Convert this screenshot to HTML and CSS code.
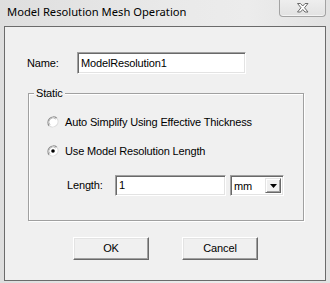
FILE: index.html
```html
<!DOCTYPE html>
<html>
<head>
<meta charset="utf-8">
<link rel="stylesheet" href="styles.css">
</head>
<body>
<div class="window">
  <div class="titlebar">
    <span class="title">Model Resolution Mesh Operation</span>
    <div class="close">
      <svg width="12" height="10" viewBox="0 0 12 10"><polygon points="0.5,0.5 3.5,0.5 5.75,3 8,0.5 11,0.5 7.5,4.75 11,9 8,9 5.75,6.5 3.5,9 0.5,9 4,4.75" fill="#fff" stroke="#6a6a6a" stroke-width="1" stroke-linejoin="round"/></svg>
    </div>
  </div>
  <div class="client">
    <div class="name-row">
      <span class="label name-label">Name:</span>
      <div class="textbox name-box">ModelResolution1</div>
    </div>
    <div class="group">
      <span class="legend">Static</span>
      <div class="radio-row">
        <span class="radio"><svg width="12" height="12" viewBox="0 0 12 12"><circle cx="6" cy="6" r="5.4" fill="#fff"/><path d="M2.2 9.8A5.4 5.4 0 0 1 9.8 2.2" fill="none" stroke="#8c8c8c" stroke-width="1.2"/><path d="M9.8 2.2A5.4 5.4 0 0 1 2.2 9.8" fill="none" stroke="#dcdcdc" stroke-width="1.2"/><path d="M3.1 8.9A4.1 4.1 0 0 1 8.9 3.1" fill="none" stroke="#bdbdbd" stroke-width="1"/></svg></span>
        <span class="label">Auto Simplify Using Effective Thickness</span>
      </div>
      <div class="radio-row second">
        <span class="radio"><svg width="12" height="12" viewBox="0 0 12 12"><circle cx="6" cy="6" r="5.4" fill="#fff"/><path d="M2.2 9.8A5.4 5.4 0 0 1 9.8 2.2" fill="none" stroke="#8c8c8c" stroke-width="1.2"/><path d="M9.8 2.2A5.4 5.4 0 0 1 2.2 9.8" fill="none" stroke="#dcdcdc" stroke-width="1.2"/><path d="M3.1 8.9A4.1 4.1 0 0 1 8.9 3.1" fill="none" stroke="#bdbdbd" stroke-width="1"/><circle cx="6" cy="6" r="1.8" fill="#000"/></svg></span>
        <span class="label">Use Model Resolution Length</span>
      </div>
      <div class="length-row">
        <span class="label length-label">Length:</span>
        <div class="textbox len-box">1</div>
        <div class="combo">
          <span class="combo-text">mm</span>
          <span class="drop"><svg width="7" height="4" viewBox="0 0 7 4"><polygon points="0,0 7,0 3.5,4" fill="#000"/></svg></span>
        </div>
      </div>
    </div>
    <div class="buttons">
      <div class="btn">OK</div>
      <div class="btn">Cancel</div>
    </div>
  </div>
</div>
</body>
</html>
```

FILE: styles.css
```css
html, body {
  margin: 0;
  padding: 0;
}
body {
  width: 330px;
  height: 283px;
  overflow: hidden;
  background: #e4e4e4;
}
.window {
  width: 330px;
  height: 283px;
  box-sizing: border-box;
  padding: 0 4px 2px 4px;
  background: linear-gradient(to right, #dedede 0%, #e9e9e9 50%, #ececec 75%, #e2e2e2 100%);
  display: flex;
  flex-direction: column;
}
.titlebar {
  height: 26px;
  display: flex;
  align-items: flex-start;
  justify-content: space-between;
  flex: none;
}
.title {
  font-family: "Noto Sans", "Open Sans", sans-serif;
  font-size: 11.2px;
  color: #000;
  margin-left: 3px;
  margin-top: 3px;
  line-height: 17px;
}
.close {
  width: 47px;
  height: 17px;
  box-sizing: border-box;
  border: 1px solid #a3a3a3;
  border-top: none;
  border-radius: 0 0 4px 4px;
  background: linear-gradient(#eeeeee, #e2e2e2);
  box-shadow: inset 0 -1px 0 #f4f4f4;
  display: flex;
  align-items: center;
  justify-content: center;
  padding-bottom: 1px;
}
.close svg { display: block; }
.client {
  width: 322px;
  height: 255px;
  box-sizing: border-box;
  border: 1px solid #6b6b6b;
  background: #f0f0f0;
  font-family: "Liberation Sans", Arial, sans-serif;
  font-size: 11px;
  letter-spacing: -0.15px;
  color: #000;
  display: flex;
  flex-direction: column;
}
.label {
  line-height: 13px;
  white-space: nowrap;
}
.name-row {
  display: flex;
  align-items: center;
  margin-top: 25px;
  padding-left: 22px;
  height: 22px;
}
.name-label { width: 50px; }
.textbox {
  box-sizing: border-box;
  background: #fff;
  border-top: 1px solid #a0a0a0;
  border-left: 1px solid #a0a0a0;
  border-right: 1px solid #ffffff;
  border-bottom: 1px solid #ffffff;
  box-shadow: inset 1px 1px 0 #696969, inset -1px -1px 0 #e3e3e3;
  padding-left: 3px;
  display: flex;
  align-items: center;
  line-height: 13px;
}
.name-box {
  width: 169px;
  height: 22px;
}
.group {
  position: relative;
  margin-top: 19px;
  margin-left: 23px;
  width: 276px;
  height: 128px;
  box-sizing: border-box;
  border: 1px solid #a0a0a0;
  box-shadow: inset 1px 1px 0 #fff, 1px 1px 0 #fff;
  padding: 22px 0 0 18px;
  display: flex;
  flex-direction: column;
}
.legend {
  position: absolute;
  top: -7px;
  left: 5px;
  background: #f0f0f0;
  padding: 0 2px 0 2px;
  line-height: 13px;
}
.radio-row {
  display: flex;
  align-items: center;
  height: 12px;
}
.radio-row.second { margin-top: 17px; }
.radio {
  width: 12px;
  height: 12px;
  margin-right: 6px;
  flex: none;
}
.radio svg { display: block; }
.length-row {
  display: flex;
  align-items: center;
  margin-top: 18px;
  margin-left: 20px;
  height: 21px;
}
.length-label { width: 48px; }
.len-box {
  width: 111px;
  height: 21px;
}
.combo {
  margin-left: 4px;
  width: 54px;
  height: 21px;
  box-sizing: border-box;
  background: #fff;
  border-top: 1px solid #a0a0a0;
  border-left: 1px solid #a0a0a0;
  border-right: 1px solid #ffffff;
  border-bottom: 1px solid #ffffff;
  box-shadow: inset 1px 1px 0 #696969, inset -1px -1px 0 #e3e3e3;
  display: flex;
  align-items: stretch;
  padding: 2px;
}
.combo-text {
  flex: 1;
  padding-left: 1px;
  display: flex;
  align-items: center;
}
.drop {
  width: 16px;
  box-sizing: border-box;
  background: #f0f0f0;
  border-top: 1px solid #e3e3e3;
  border-left: 1px solid #e3e3e3;
  border-right: 1px solid #696969;
  border-bottom: 1px solid #696969;
  box-shadow: inset 1px 1px 0 #fff, inset -1px -1px 0 #a0a0a0;
  display: flex;
  align-items: center;
  justify-content: center;
}
.drop svg { display: block; }
.buttons {
  display: flex;
  margin-top: 16px;
  margin-left: 68px;
  gap: 33px;
}
.btn {
  width: 76px;
  height: 23px;
  box-sizing: border-box;
  background: #f0f0f0;
  border-top: 1px solid #ffffff;
  border-left: 1px solid #ffffff;
  border-right: 1px solid #696969;
  border-bottom: 1px solid #696969;
  box-shadow: inset -1px -1px 0 #a0a0a0, inset 1px 1px 0 #e3e3e3;
  display: flex;
  align-items: center;
  justify-content: center;
  line-height: 13px;
  padding-bottom: 1px;
}
```
